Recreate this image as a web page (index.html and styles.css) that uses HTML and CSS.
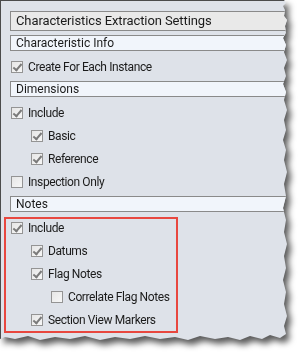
FILE: index.html
```html
<!DOCTYPE html>
<html lang="en">
<head>
    <meta charset="UTF-8">
    <title>Characteristics Extraction Settings</title>
    <link rel="stylesheet" href="styles.css">
</head>
<body>
    <div class="sheet">
        <div class="panel">
            <div class="title">Characteristics Extraction Settings</div>

            <div class="section">Characteristic Info</div>
            <div class="row"><span class="box on"></span>Create For Each Instance</div>

            <div class="section">Dimensions</div>
            <div class="row"><span class="box on"></span>Include</div>
            <div class="row lvl1"><span class="box on"></span>Basic</div>
            <div class="row lvl1"><span class="box on"></span>Reference</div>
            <div class="row"><span class="box"></span>Inspection Only</div>

            <div class="section">Notes</div>
            <div class="row"><span class="box on"></span>Include</div>
            <div class="row lvl1"><span class="box on"></span>Datums</div>
            <div class="row lvl1"><span class="box on"></span>Flag Notes</div>
            <div class="row lvl2"><span class="box"></span>Correlate Flag Notes</div>
            <div class="row lvl1"><span class="box on"></span>Section View Markers</div>

            <div class="highlight"></div>
        </div>
    </div>
</body>
</html>
```

FILE: styles.css
```css
body {
    margin: 0;
    background: #fff;
    font-family: Roboto, "Liberation Sans", sans-serif;
    color: #1b1b1b;
}
.sheet {
    width: 303px;
    height: 358px;
    filter: drop-shadow(4px 5px 3px rgba(0, 0, 0, 0.65));
}
.panel {
    position: relative;
    box-sizing: border-box;
    width: 292px;
    height: 341px;
    padding: 10px 0 0 9px;
    background: #dee2e9;
    border-top: 1px solid #4b4b4b;
    border-left: 1px solid #4b4b4b;
    border-bottom: 1px solid #9a9a9a;
    clip-path: polygon(0 0, 284px 0, 286px 3px, 283px 6px, 285px 10px, 284px 16px, 287px 20px, 285px 26px, 286px 33px, 283px 38px, 286px 45px, 284px 52px, 287px 60px, 284px 68px, 286px 76px, 283px 84px, 286px 92px, 284px 100px, 287px 110px, 284px 120px, 286px 130px, 283px 140px, 286px 150px, 284px 160px, 287px 172px, 284px 184px, 286px 196px, 283px 208px, 286px 220px, 284px 232px, 287px 244px, 284px 256px, 286px 268px, 283px 280px, 286px 292px, 284px 304px, 287px 316px, 284px 326px, 286px 334px, 280px 338px, 270px 335px, 262px 339px, 250px 336px, 240px 340px, 228px 337px, 215px 339px, 200px 336px, 188px 340px, 175px 337px, 160px 339px, 145px 336px, 130px 339px, 115px 337px, 100px 340px, 85px 336px, 70px 339px, 55px 337px, 40px 340px, 28px 336px, 15px 339px, 5px 337px, 0 339px);
}
.title {
    height: 18px;
    line-height: 18px;
    padding-left: 5px;
    margin-bottom: 4px;
    font-size: 13px;
    letter-spacing: -0.1px;
    background: #e9e9e9;
    border: 1px solid #8a8a8a;
    border-right: none;
}
.section {
    height: 14px;
    line-height: 14px;
    padding-left: 5px;
    margin: 3px 0 4px;
    font-size: 12px;
    background: #f1f5fb;
    border: 1px solid #8a8a8a;
    border-right: none;
}
.title + .section {
    margin-top: 0;
}
.row {
    display: flex;
    align-items: center;
    gap: 5px;
    height: 23px;
    padding-left: 1px;
    font-size: 12px;
    letter-spacing: -0.4px;
}
.lvl1 { padding-left: 21px; }
.lvl2 { padding-left: 41px; }
.box {
    box-sizing: border-box;
    width: 12px;
    height: 12px;
    border: 1px solid #949494;
    background: linear-gradient(135deg, #e6e6e6, #f7f7f7);
    position: relative;
}
.box.on::after {
    content: "";
    position: absolute;
    left: 3px;
    top: 0;
    width: 3px;
    height: 7px;
    border-right: 2px solid #7b7b7b;
    border-bottom: 2px solid #7b7b7b;
    transform: rotate(40deg);
}
.highlight {
    position: absolute;
    left: 3px;
    top: 216px;
    width: 170px;
    height: 112px;
    border: 2px solid #e8473f;
}
```
